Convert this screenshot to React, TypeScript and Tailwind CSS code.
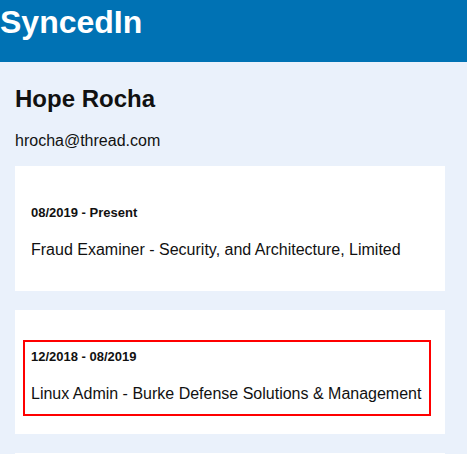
import React from 'react';

interface Job {
  id: string;
  dates: string;
  title: string;
  highlighted?: boolean;
}

const jobs: Job[] = [
  { id: 'j1', dates: '08/2019 - Present', title: 'Fraud Examiner - Security, and Architecture, Limited' },
  { id: 'j2', dates: '12/2018 - 08/2019', title: 'Linux Admin - Burke Defense Solutions & Management', highlighted: true },
  { id: 'j3', dates: '03/2016 - 12/2018', title: 'Systems Analyst - Rocha Holdings' },
];

const JobCard = ({ job }: { job: Job }) => (
  <div className="bg-white pt-[30px] pb-[18.5px] pl-2 pr-[14px]">
    <div
      className={`border-2 pt-[7px] pb-[11px] px-[6px] ${
        job.highlighted ? 'border-[#ff0000]' : 'border-transparent'
      }`}
    >
      <h4 className="text-[13px] leading-[15px] font-bold">{job.dates}</h4>
      <p className="mt-[21px] text-[16px] leading-[18px]">{job.title}</p>
    </div>
  </div>
);

const App = () => {
  return (
    <div
      className="min-h-screen bg-[#eaf1fb] text-[#111]"
      style={{ fontFamily: '"Liberation Sans", Arial, sans-serif' }}
    >
      <header className="h-[62px] bg-[#0072b4] pt-[4px]">
        <h1 className="text-[32px] leading-[37px] font-bold text-white">SyncedIn</h1>
      </header>

      <main className="px-[15px] w-[460px]">
        <h2 className="mt-[23px] text-[24px] leading-[28px] font-bold">Hope Rocha</h2>
        <p className="mt-[19px] text-[16px] leading-[18px]">hrocha@thread.com</p>

        <div className="mt-[16px] flex flex-col gap-[19px]">
          {jobs.map((job) => (
            <JobCard key={job.id} job={job} />
          ))}
        </div>
      </main>
    </div>
  );
};

export default App;
